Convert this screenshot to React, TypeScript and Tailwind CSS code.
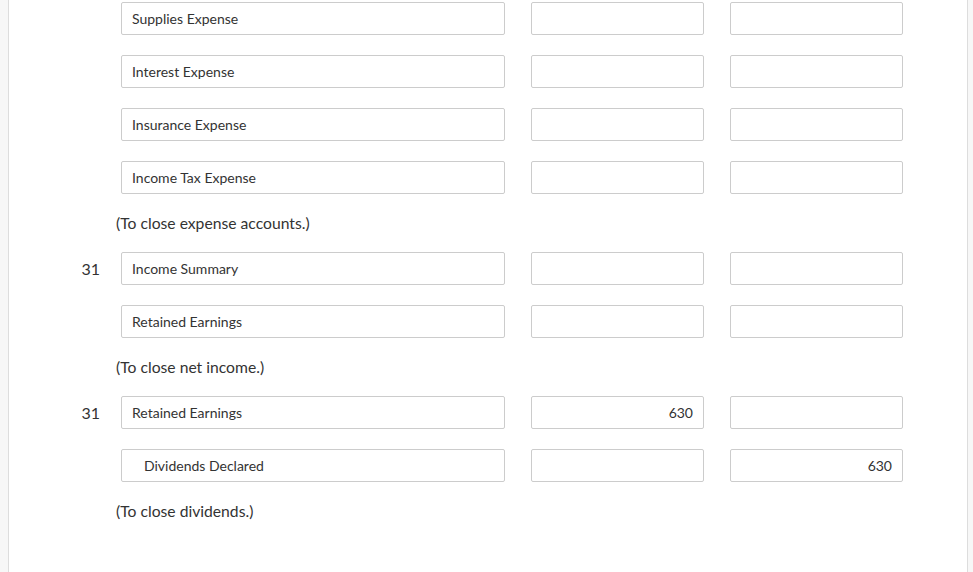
import React from "react";

interface Entry {
    date?: string;
    account: string;
    indent?: boolean;
    debit?: string;
    credit?: string;
}

interface Block {
    rows: Entry[];
    note: string;
    noteClass: string;
}

const BLOCKS: Block[] = [
    {
        rows: [
            { account: "Supplies Expense" },
            { account: "Interest Expense" },
            { account: "Insurance Expense" },
            { account: "Income Tax Expense" },
        ],
        note: "(To close expense accounts.)",
        noteClass: "mb-[19px]",
    },
    {
        rows: [
            { date: "31", account: "Income Summary" },
            { account: "Retained Earnings" },
        ],
        note: "(To close net income.)",
        noteClass: "mb-[19px]",
    },
    {
        rows: [
            { date: "31", account: "Retained Earnings", debit: "630" },
            { account: "Dividends Declared", indent: true, credit: "630" },
        ],
        note: "(To close dividends.)",
        noteClass: "",
    },
];

const Box: React.FC<{ className?: string; children?: React.ReactNode }> = ({ className, children }) => (
    <div
        className={
            "h-[33px] border border-[#cccccc] rounded-[2px] bg-white flex items-center text-[14px] text-[#333333] " +
            (className ?? "")
        }
    >
        {children}
    </div>
);

const EntryRow: React.FC<{ entry: Entry }> = ({ entry }) => (
    <div className="flex items-center mb-[20px]">
        <div className="w-[112px] shrink-0 text-right pr-[21px] text-[16px] text-[#333333]">{entry.date ?? ""}</div>
        <Box className={"w-[384px] " + (entry.indent ? "pl-[22px]" : "pl-[10px]")}>{entry.account}</Box>
        <Box className="w-[173px] ml-[26px] justify-end pr-[10px]">{entry.debit ?? ""}</Box>
        <Box className="w-[173px] ml-[26px] justify-end pr-[10px]">{entry.credit ?? ""}</Box>
    </div>
);

export default function App() {
    return (
        <div
            className="min-h-[572px] bg-[#f7f7f7] pl-[8px] pr-[5px]"
            style={{ fontFamily: "Lato, 'Liberation Sans', sans-serif" }}
        >
            <div className="min-h-[572px] bg-white border-l border-r border-[#dddddd] pt-[2px] flex flex-col">
                {BLOCKS.map((block, i) => (
                    <React.Fragment key={i}>
                        {block.rows.map((r, j) => (
                            <EntryRow key={j} entry={r} />
                        ))}
                        <div className={"h-[19px] leading-[19px] pl-[107px] text-[15.7px] text-[#333333] " + block.noteClass}>
                            {block.note}
                        </div>
                    </React.Fragment>
                ))}
            </div>
        </div>
    );
}
